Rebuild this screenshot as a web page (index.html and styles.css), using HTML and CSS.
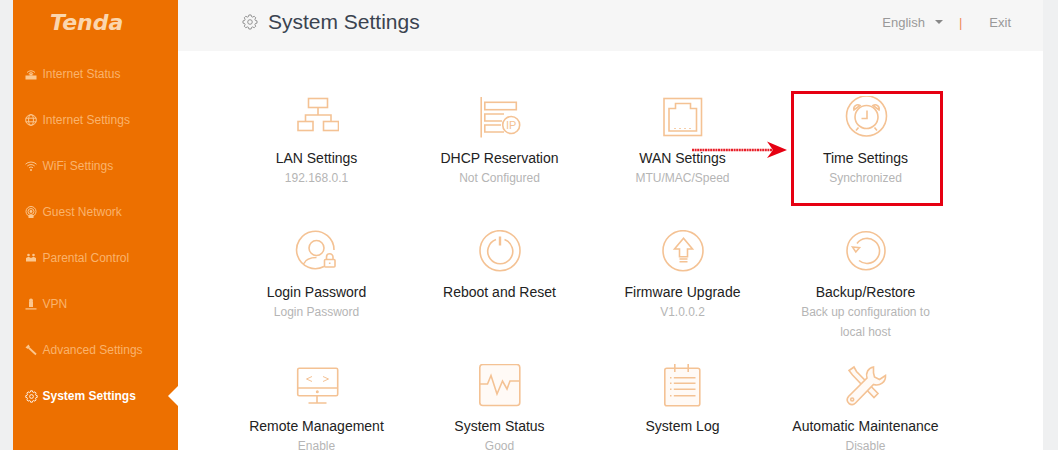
FILE: index.html
```html
<!DOCTYPE html>
<html lang="en">
<head>
    <meta charset="UTF-8">
    <title>System Settings</title>
    <link rel="stylesheet" href="styles.css">
</head>
<body>

<svg class="defs" width="0" height="0">
    <symbol id="gear" viewBox="-9 -9 18 18">
        <polygon points="7.9,1.25 6.06,1.74 5.51,3.05 6.47,4.7 4.7,6.47 3.05,5.51 1.74,6.06 1.25,7.9 -1.25,7.9 -1.74,6.06 -3.05,5.51 -4.7,6.47 -6.47,4.7 -5.51,3.05 -6.06,1.74 -7.9,1.25 -7.9,-1.25 -6.06,-1.74 -5.51,-3.05 -6.47,-4.7 -4.7,-6.47 -3.05,-5.51 -1.74,-6.06 -1.25,-7.9 1.25,-7.9 1.74,-6.06 3.05,-5.51 4.7,-6.47 6.47,-4.7 5.51,-3.05 6.06,-1.74 7.9,-1.25"/>
        <circle r="2.6"/>
    </symbol>
</svg>

<div class="page">
    <aside class="sidebar">
        <div class="logo">Tenda</div>
        <ul class="menu">
            <li class="menu-item">
                <svg class="menu-icon" viewBox="0 0 12 12"><path d="M2 4.500a5.500 5.500 0 0 1 8 0M3.700 5.700a3.200 3.200 0 0 1 4.600 0" class="line"/><rect x="4.500" y="5.500" width="3" height="2" class="solid"/><rect x="0.500" y="7.500" width="11" height="4" class="solid"/></svg>
                Internet Status
            </li>
            <li class="menu-item">
                <svg class="menu-icon" viewBox="0 0 12 12"><g class="line"><circle cx="6" cy="6" r="5.300"/><ellipse cx="6" cy="6" rx="2.400" ry="5.300"/><path d="M0.700 4.200h10.600M0.700 7.800h10.600"/></g></svg>
                Internet Settings
            </li>
            <li class="menu-item">
                <svg class="menu-icon" viewBox="0 0 12 12"><g class="line"><path d="M0.500 4.200a8 8 0 0 1 11 0M2.300 6a5.500 5.500 0 0 1 7.400 0M4 7.800a3 3 0 0 1 4 0"/></g><circle cx="6" cy="10" r="1" class="solid"/></svg>
                WiFi Settings
            </li>
            <li class="menu-item">
                <svg class="menu-icon" viewBox="0 0 12 12"><g class="line"><circle cx="6" cy="5.500" r="5"/><circle cx="6" cy="5.500" r="3"/></g><circle cx="6" cy="5.500" r="1.400" class="solid"/><rect x="3.500" y="9" width="5" height="3" class="solid"/></svg>
                Guest Network
            </li>
            <li class="menu-item">
                <svg class="menu-icon" viewBox="0 0 12 12"><circle cx="3.500" cy="3" r="1.300" class="solid"/><circle cx="8.500" cy="3" r="1.300" class="solid"/><path d="M1 9.500V6L3.500 4.700 6 6 8.500 4.700 11 6V9.500Z" class="solid"/></svg>
                Parental Control
            </li>
            <li class="menu-item">
                <svg class="menu-icon" viewBox="0 0 12 12"><circle cx="6" cy="2.500" r="2" class="solid"/><rect x="4" y="3.500" width="4" height="5.500" class="solid"/><rect x="0.500" y="10.300" width="11" height="1.200" class="solid"/></svg>
                VPN
            </li>
            <li class="menu-item">
                <svg class="menu-icon" viewBox="0 0 12 12"><path d="M0.500 3.500 3.500 0.500 5 3 3 5Z" class="solid"/><path d="M4 4 11 10.500" class="wide"/></svg>
                Advanced Settings
            </li>
            <li class="menu-item active">
                <svg class="menu-icon gear-icon"><use href="#gear"/></svg>
                System Settings
            </li>
        </ul>
    </aside>

    <main class="main">
        <header class="topbar">
            <svg class="title-gear"><use href="#gear"/></svg>
            <h1>System Settings</h1>
            <div class="top-links">
                <span class="lang">English</span>
                <span class="caret"></span>
                <span class="sep">|</span>
                <span class="exit">Exit</span>
            </div>
        </header>

        <div class="grid">
            <div class="item">
                <svg class="icon" viewBox="0 0 44 44"><rect x="13.500" y="2.500" width="19" height="9"/><rect x="3" y="25.500" width="15" height="9"/><rect x="28.500" y="25.500" width="15" height="9"/><path d="M23 11.500V19M10.500 25.500V19H36V25.500"/></svg>
                <div class="name">LAN Settings</div>
                <div class="sub">192.168.0.1</div>
            </div>
            <div class="item">
                <svg class="icon" viewBox="0 0 44 44"><path d="M3.200 1V41.500"/><rect x="6.800" y="6.300" width="31.500" height="7.400"/><path d="M26 18H6.800V25H24M23 29H6.800V36H26"/><circle cx="33.200" cy="29" r="8.500"/><text x="33.200" y="33" class="icon-text">IP</text></svg>
                <div class="name">DHCP Reservation</div>
                <div class="sub">Not Configured</div>
            </div>
            <div class="item">
                <svg class="icon" viewBox="0 0 44 44"><rect x="3" y="2.500" width="37.500" height="37"/><path d="M8 35V12.500H14.500V7.500H29.500V12.500H35.500V35Z"/><path d="M14 33V32M19 33V32M24 33V32M29 33V32"/></svg>
                <div class="name">WAN Settings</div>
                <div class="sub">MTU/MAC/Speed</div>
            </div>
            <div class="item">
                <svg class="icon" viewBox="0 0 44 44"><circle cx="22.500" cy="20" r="20"/><circle cx="22.500" cy="21" r="11.500"/><path d="M23 14.500V22.500H17.500M14.500 31.500 12 34.500M30.500 31.500 33 34.500"/><path d="M10 14a4 4 0 0 1 6-4.500ZM35 14a4 4 0 0 0-6-4.500Z"/></svg>
                <div class="name">Time Settings</div>
                <div class="sub">Synchronized</div>
            </div>

            <div class="item">
                <svg class="icon" viewBox="0 0 44 44"><path d="M39 20a18.700 18.700 0 1 0-10 16.500M9 33.500C11 28.500 15.500 27.500 21.500 27.500"/><circle cx="21.500" cy="18" r="7.500"/><rect x="29.500" y="29.500" width="10.500" height="7.500" rx="1"/><path d="M31.500 29.500V27a3.200 3.200 0 0 1 6.500 0V29.500M34.700 32.500V34"/></svg>
                <div class="name">Login Password</div>
                <div class="sub">Login Password</div>
            </div>
            <div class="item">
                <svg class="icon" viewBox="0 0 44 44"><circle cx="22" cy="20.700" r="20"/><path d="M18 9.500a12.500 12.500 0 1 0 8.500 0"/><path d="M22 6.500V15.500" class="thick"/></svg>
                <div class="name">Reboot and Reset</div>
                <div class="sub"></div>
            </div>
            <div class="item">
                <svg class="icon" viewBox="0 0 44 44"><circle cx="22" cy="20.700" r="20"/><path d="M22.500 8.300 13.500 19H18.500V26.700H26.500V19H31.500Z"/><path d="M18.500 29H26.500M18.500 31.700H26.500"/></svg>
                <div class="name">Firmware Upgrade</div>
                <div class="sub">V1.0.0.2</div>
            </div>
            <div class="item">
                <svg class="icon" viewBox="0 0 44 44"><circle cx="22" cy="20.700" r="19"/><path d="M13 13.500A12.500 12.500 0 1 1 15 30.500"/><path d="M8.500 17 15.500 17.700 11.800 22Z"/></svg>
                <div class="name">Backup/Restore</div>
                <div class="sub">Back up configuration to local host</div>
            </div>

            <div class="item">
                <svg class="icon" viewBox="0 0 44 44"><rect x="2.700" y="4.300" width="40" height="27.500" rx="1.500"/><path d="M2.700 24H42.700M22 31.800V38.800M13.500 39H31.500"/><path d="M17 12.500 11.500 15 17 17.500M28 12.500 33.500 15 28 17.500" class="thin"/><circle cx="22.300" cy="27.700" r="0.700"/></svg>
                <div class="name">Remote Management</div>
                <div class="sub">Enable</div>
            </div>
            <div class="item">
                <svg class="icon" viewBox="0 0 44 44"><rect x="1.800" y="0.500" width="40" height="41" rx="3" class="tint"/><path d="M2 20H9.500L13 11.500 19 30 24.500 17 29 25 32 17H41.500"/></svg>
                <div class="name">System Status</div>
                <div class="sub">Good</div>
            </div>
            <div class="item">
                <svg class="icon" viewBox="0 0 44 44"><rect x="3.800" y="4.300" width="35" height="37.500" rx="2" class="tint"/><path d="M13.800 0V8M27.200 0V8M12.800 13.700H34.500M12.800 19.300H34.500M12.800 25.300H34.500M12.800 31.700H34.500M9 13.700H10.500M9 19.300H10.500M9 25.300H10.500M9 31.700H10.500"/></svg>
                <div class="name">System Log</div>
                <div class="sub"></div>
            </div>
            <div class="item">
                <svg class="icon" viewBox="0 0 44 44"><path d="M8.500 11 30 33.500 34 29.500 12.500 7.500 10 3 5 6.500Z" class="tint"/><path d="M29.500 3C24 4 21.500 9 23 14L4.500 32.500C2 35.500 3.500 38 5 39.500 7 41 9.500 41 11.500 39L29.500 20.500C36 22.500 42 18 41.500 11.500L35.500 15.500 30.500 13 29.500 9Z" class="tint"/><circle cx="8.200" cy="35.500" r="1.500"/></svg>
                <div class="name">Automatic Maintenance</div>
                <div class="sub">Disable</div>
            </div>
        </div>

        <!-- annotation drawn on top of the screenshot -->
        <div class="red-box"></div>
        <svg class="red-arrow" viewBox="0 0 96 20"><path d="M0 10H82" class="arrow-line"/><path d="M75 1.500 95 10 75 18 81 10Z" class="arrow-head"/></svg>
    </main>
</div>

</body>
</html>
```

FILE: styles.css
```css
body {
    margin: 0;
    height: 450px;
    overflow: hidden;
    background-color: #eff0f1;
    font-family: "Liberation Sans", Arial, sans-serif;
}
.defs {
    position: absolute;
}
.page {
    display: flex;
    height: 450px;
    margin: 0 15px 0 13px;
}

/* sidebar */
.sidebar {
    width: 165px;
    flex-shrink: 0;
    background-color: #ed7000;
    color: #fab36c;
}
.logo {
    height: 46px;
    line-height: 46px;
    padding-left: 37px;
    color: #fbd6ae;
    font-family: "DejaVu Sans", sans-serif;
    font-size: 22px;
    font-weight: bold;
    font-style: italic;
}
.menu {
    list-style: none;
    margin: 5px 0 0;
    padding: 0;
}
.menu-item {
    position: relative;
    display: flex;
    align-items: center;
    gap: 5.5px;
    height: 46px;
    padding-left: 12px;
    font-size: 12px;
}
.menu-item.active {
    color: #fff;
    font-weight: bold;
}
.menu-item.active::after {
    content: "";
    position: absolute;
    right: 0;
    top: 13px;
    border-top: 10px solid transparent;
    border-bottom: 10px solid transparent;
    border-right: 10px solid #fff;
}
.menu-icon {
    width: 12px;
    height: 12px;
    flex-shrink: 0;
    color: #fbc78f;
}
.menu-icon .line {
    fill: none;
    stroke: currentColor;
    stroke-width: 1;
}
.menu-icon .wide {
    fill: none;
    stroke: currentColor;
    stroke-width: 1.8;
}
.menu-icon .solid {
    fill: currentColor;
}
.gear-icon {
    width: 13px;
    height: 13px;
    margin-right: -1px;
    fill: none;
    stroke: #fff;
    stroke-width: 1.2;
    color: #fff;
}

/* main area */
.main {
    position: relative;
    flex: 1;
    overflow: hidden;
    background-color: #fff;
}
.topbar {
    display: flex;
    align-items: center;
    height: 51px;
    padding: 0 32px 8px 64px;
    box-sizing: border-box;
    background-color: #f6f6f6;
}
.title-gear {
    width: 16px;
    height: 16px;
    margin-right: 10px;
    fill: none;
    stroke: #888;
    stroke-width: 1;
}
.topbar h1 {
    margin: 0;
    color: #3a4350;
    font-size: 21px;
    font-weight: normal;
}
.top-links {
    display: flex;
    align-items: center;
    margin: 1px 0 0 auto;
    color: #999;
    font-size: 13px;
}
.caret {
    margin-left: 10px;
    border-top: 4px solid #888;
    border-left: 4px solid transparent;
    border-right: 4px solid transparent;
}
.sep {
    margin-left: 16px;
    color: #ee8a5a;
}
.exit {
    margin-left: 27px;
}

/* settings grid */
.grid {
    display: grid;
    grid-template-columns: repeat(4, 183px);
    grid-auto-rows: 134px;
    padding: 45px 0 0 47px;
}
.item {
    text-align: center;
}
.icon {
    display: block;
    width: 44px;
    height: 44px;
    margin: 0 auto;
    fill: none;
    stroke: #f4c294;
    stroke-width: 1.6;
}
.icon .thin {
    stroke-width: 1;
}
.icon .thick {
    stroke-width: 2.4;
}
.icon .tint {
    fill: #fffaf6;
}
.icon-text {
    fill: #f4c294;
    stroke: none;
    font-size: 11px;
    text-anchor: middle;
}
.name {
    margin-top: 9px;
    color: #222;
    font-size: 14px;
    line-height: 18px;
}
.sub {
    width: 150px;
    margin: 1px auto 0;
    color: #b5b5b5;
    font-size: 12px;
    line-height: 20px;
}

/* red annotation */
.red-box {
    position: absolute;
    left: 613px;
    top: 91px;
    width: 152px;
    height: 115px;
    box-sizing: border-box;
    border: 3px solid #e60012;
}
.red-arrow {
    position: absolute;
    left: 514px;
    top: 140px;
    width: 96px;
    height: 20px;
}
.arrow-line {
    fill: none;
    stroke: #e8202a;
    stroke-width: 2.4;
    stroke-dasharray: 2 0.6;
}
.arrow-head {
    fill: #e60012;
}
```
